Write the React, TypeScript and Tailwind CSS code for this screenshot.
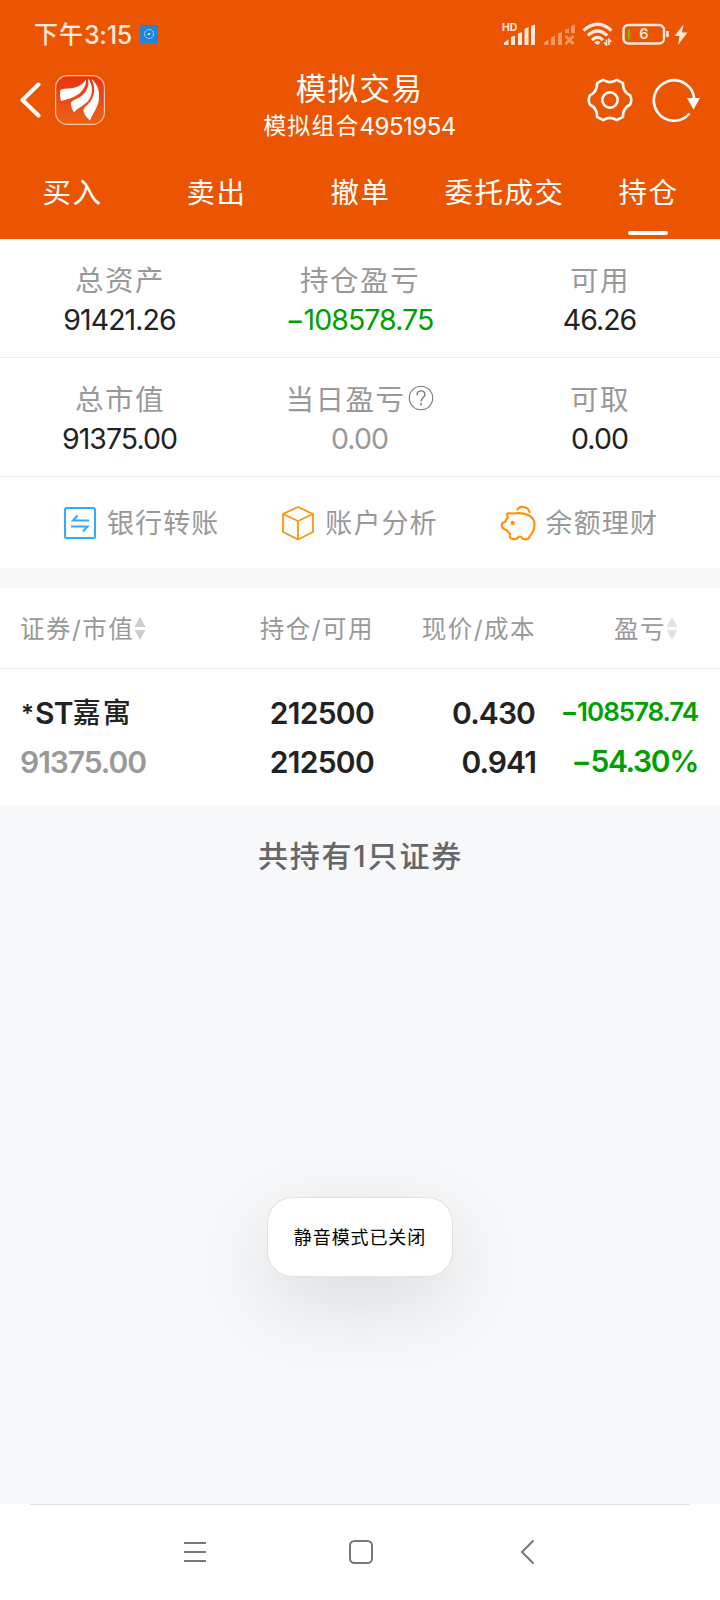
import React from "react";

const tabs = ["买入", "卖出", "撤单", "委托成交", "持仓"];

const StatusBar = () => (
  <div className="flex h-[68px] items-center justify-between pl-[34px] pr-[32px] text-[#fde9de]">
    <div className="flex items-center">
      <span className="pt-[2px] text-[24px] font-medium leading-[68px] tracking-[1px]">下午</span>
      <span className="pt-[2px] text-[25px] font-medium leading-[68px] tracking-[-0.300px]">3:15</span>
      <svg className="ml-[8px] h-[18px] w-[18px]" viewBox="0 0 18 18" fill="none">
        <rect width="18" height="18" fill="#1e86d6" />
        <circle cx="9" cy="9" r="4.500" stroke="#bfe3fa" strokeDasharray="2.2 0.8" />
        <path d="M8 9.800 10 8.200" stroke="#fff" strokeWidth="1.300" />
      </svg>
    </div>
    <div className="flex items-center">
      {/* Signal, SIM 1 */}
      <div className="relative h-[22px] w-[34px]">
        <span className="absolute left-0 top-0 text-[10.500px] font-bold leading-[10px]">HD</span>
        <svg className="h-[22px] w-[34px]" viewBox="0 0 34 22" fill="currentColor">
          <path d="M2 22v-2.500l4.500-3V22zM9 22v-8l4-1.500V22zM16 22V10.500l4-1.500V22zM22.500 22V6l4-2v18zM29 22V3L33 1.500V22z" />
        </svg>
      </div>
      {/* Signal, SIM 2 */}
      <svg className="ml-[7px] h-[22px] w-[32px]" viewBox="0 0 32 22" fill="currentColor" opacity="0.450">
        <path d="M1 22v-2.500l4.500-3V22zM8 22v-7.500l4-2V22zM15 22V10.500l4-1.500V22zM22 10V7l4-2v5zM28 10V3L32 1.500V10z" />
        <path d="M22.500 13l8 8M30.500 13l-8 8" stroke="currentColor" strokeWidth="2.800" />
      </svg>
      <svg className="ml-[7px] h-[24px] w-[31px]" viewBox="0 0 31 24" fill="none" stroke="currentColor" strokeWidth="3.200">
        <path d="M1.500 8.500Q15.500-4 29.500 8.500" />
        <path d="M5.800 13.500Q15.500 4.500 25.200 13.500" />
        <path d="M10 18.200Q15.500 12.500 21 18.200" />
        <path d="M12 20.500Q15.500 17 18.500 20.500L15.500 23z" fill="currentColor" stroke="none" />
        <path d="M24.500 17.500V23l-2.500-2.500M27 23v-5.500l2.500 2.500" strokeWidth="1.600" />
      </svg>
      <div className="relative ml-[9px] h-[22px] w-[48px]">
        <svg className="h-[22px] w-[48px]" viewBox="0 0 48 22" fill="none">
          <rect x="1.500" y="2" width="40.500" height="18.500" rx="5" stroke="currentColor" strokeWidth="2.400" />
          <path d="M7 6.500v10" stroke="#5fc800" strokeWidth="2" />
          <path d="M45.500 8v6" stroke="currentColor" strokeWidth="2.600" />
        </svg>
        <span className="absolute left-0 top-0 w-[44px] text-center text-[14.500px] font-semibold leading-[22px]">6</span>
      </div>
      <svg className="ml-[4px] h-[21px] w-[14px]" viewBox="0 0 14 21" fill="currentColor">
        <path d="M9.500 0.500 0.500 12h5L4 21 13.500 8.500H8z" />
      </svg>
    </div>
  </div>
);

const AppLogo = () => (
  <svg className="ml-[14px] h-[50px] w-[50px]" viewBox="0 0 50 50">
    <defs>
      <linearGradient id="logo" x1="0" y1="0" x2="0" y2="1">
        <stop offset="0" stopColor="#e93312" />
        <stop offset="1" stopColor="#ec6316" />
      </linearGradient>
    </defs>
    <rect x="0.600" y="0.600" width="48.800" height="48.800" rx="12" fill="url(#logo)" stroke="#f9c3a8" strokeWidth="1.200" />
    <g fill="#fff">
      <path d="M31 4.500C27 10 23 12 18 13C13 14 8 13 5.500 15C4.500 18 5 22.500 6 26C13 24 20 22.500 25 18C29 14 31.500 9.500 31 4.500z" />
      <path d="M33 3.500C34.500 12 31 18 25 22C21 24.500 17 25 16 28C15.700 32 17.500 34.500 19 37.500C22 33 29 31 33.500 25.500C38 20 38.500 10 33 3.500z" />
      <path d="M36.500 4C41 13 39.500 21 35 27C31.500 31 28 33 28.500 36.500C29.500 40.500 32.500 42.500 35 45.500C37 40 41.500 34.500 43.500 27C45.500 18 43 9 36.500 4z" />
    </g>
  </svg>
);

const TitleBar = () => (
  <div className="flex h-[76px] items-start justify-between pl-[19px] pr-[20px]">
    <div className="flex w-[170px] items-center pt-[7px]">
      <svg className="h-[36px] w-[22px]" viewBox="0 0 22 36" fill="none" stroke="#fff" strokeWidth="4" strokeLinecap="round" strokeLinejoin="round">
        <path d="M19.500 2.500 3.500 18l16 15.500" />
      </svg>
      <AppLogo />
    </div>
    <div className="text-center text-white">
      <div className="h-[41px] text-[30.500px] leading-[41px] tracking-[1.400px]">模拟交易</div>
      <div className="flex justify-center text-[23px] leading-[35px]">
        <span className="tracking-[1.100px]">模拟组合</span>
        <span className="text-[24px] tracking-[-0.500px]">4951954</span>
      </div>
    </div>
    <div className="flex w-[170px] items-center justify-end pt-[10px] text-white">
      <svg className="h-[44px] w-[46px]" viewBox="0 0 46 44" fill="none" stroke="#fff" strokeWidth="2.600" strokeLinejoin="round">
        <path d="M16.200 1.800Q23 6.500 29.800 1.800L36 5.200Q35.500 13.500 43.200 17.500Q45.200 22 43.200 26.500Q35.500 30.500 36 38.800L29.800 42.200Q23 37.500 16.200 42.200L10 38.800Q10.500 30.500 2.800 26.500Q0.800 22 2.800 17.500Q10.500 13.500 10 5.200z" />
        <circle cx="23" cy="22" r="7.700" />
      </svg>
      <svg className="ml-[19px] h-[44px] w-[48px]" viewBox="0 0 48 44" fill="none">
        <path d="M37.500 35.500A20.200 20.200 0 1 1 42.200 21" stroke="#fff" strokeWidth="2.600" />
        <path d="M35 20h13l-6.500 11.500z" fill="#fff" />
      </svg>
    </div>
  </div>
);

const Tabs = () => (
  <div className="grid h-[95px] grid-cols-5 text-white">
    {tabs.map((tab) => (
      <div key={tab} className="flex flex-col items-center">
        <span className="h-[87px] whitespace-nowrap pl-px pt-[28px] text-[28.500px] leading-[42px] tracking-[1.500px]">{tab}</span>
        {tab === "持仓" && <span className="h-1 w-10 rounded-sm bg-white" />}
      </div>
    ))}
  </div>
);

const summary = [
  [
    { label: "总资产", value: "91421.26", color: "text-[#222]" },
    { label: "持仓盈亏", value: "−108578.75", color: "text-[#00a000]" },
    { label: "可用", value: "46.26", color: "text-[#222]" },
  ],
  [
    { label: "总市值", value: "91375.00", color: "text-[#222]" },
    { label: "当日盈亏", value: "0.00", color: "text-[#999]", help: true },
    { label: "可取", value: "0.00", color: "text-[#222]" },
  ],
];

const HelpIcon = () => (
  <svg className="ml-[2px] mr-px mt-[6px] h-[26px] w-[26px]" viewBox="0 0 26 26" fill="none" stroke="#777">
    <circle cx="13" cy="13" r="11.700" strokeWidth="1.100" />
    <path d="M9 10.200C9 4.500 17 4.500 17 9.500C17 12.500 13 12.500 13 16.500" strokeWidth="1.400" />
    <path d="M13 18.300v2" strokeWidth="1.800" />
  </svg>
);

const Summary = () => (
  <>
    {summary.map((row, i) => (
      <div key={i} className="grid h-[119px] grid-cols-3 border-b border-[#ebebeb]">
        {row.map((cell) => (
          <div key={cell.label} className="flex flex-col items-center pt-[21px]">
            <div className="flex h-[39px]">
              <span className="text-[28.500px] leading-[42px] tracking-[1.500px] text-[#999]">{cell.label}</span>
              {cell.help && <HelpIcon />}
            </div>
            <span className={`pr-px text-[28.500px] leading-[41px] tracking-[-0.950px] ${cell.color}`}>{cell.value}</span>
          </div>
        ))}
      </div>
    ))}
  </>
);

const TransferIcon = () => (
  <svg className="h-[36px] w-[34px]" viewBox="0 0 34 36" fill="none" stroke="#38a8ff" strokeWidth="2">
    <rect x="2" y="3" width="30" height="30" rx="1.500" />
    <path d="M26 15.500H10L14.500 10.500M8 21.500h16.500L20 26.500" />
  </svg>
);

const CubeIcon = () => (
  <svg className="h-[36px] w-[34px]" viewBox="0 0 34 36" fill="none" stroke="#ff920a" strokeWidth="1.800" strokeLinejoin="round">
    <path d="M17 2 32 9v18l-15 7.500L2 27V9zM2 9l15 7 15-7M17 16v18" />
  </svg>
);

const PiggyIcon = () => (
  <svg className="h-[36px] w-[36px]" viewBox="0 0 36 36" fill="none" stroke="#ff920a" strokeWidth="2.200" strokeLinecap="round" strokeLinejoin="round">
    <path d="M13 8.500C10 8.500 7 7.500 7 9.500L7.800 12.500C6.500 14 6 15 5.500 16.500L2.500 18C1.500 20 1.500 22 3.500 23.500L7 25.500L10 29V32.500C11 34.300 15 34.300 16.500 34C17.500 33.500 17.500 31.500 20 31.500C22 31.500 22 34 24 34.200C26.500 34.500 29 34.500 29.500 31.500C32.500 28.500 34.500 23 34.500 19C34.500 11 26 7 13 8.500z" />
    <path d="M17.500 4.500C20 0.500 27.500 1 29.500 7" />
    <circle cx="12.700" cy="18" r="2.200" fill="#ff920a" stroke="none" />
  </svg>
);

const shortcuts = [
  { label: "银行转账", icon: <TransferIcon /> },
  { label: "账户分析", icon: <CubeIcon /> },
  { label: "余额理财", icon: <PiggyIcon /> },
];

const Shortcuts = () => (
  <div className="flex h-[91px] items-center justify-between pl-[63px] pr-[62px]">
    {shortcuts.map((item) => (
      <div key={item.label} className="flex items-center gap-[10px]">
        {item.icon}
        <span className="pt-[3px] text-[27px] leading-[40px] tracking-[1.100px] text-[#999]">{item.label}</span>
      </div>
    ))}
  </div>
);

const SortIcon = ({ color }: { color: string }) => (
  <svg className={`h-[24px] w-[12px] ${color}`} viewBox="0 0 12 24" fill="currentColor">
    <path d="M6 0 11.500 10H0.500zM0.500 13h11L6 23z" />
  </svg>
);

const Holdings = () => (
  <div className="bg-white">
    <div className="flex h-[81px] items-center border-b border-[#ebebeb] pl-[20px] pt-[2px] text-[24.500px] tracking-[1.500px] text-[#999]">
      <div className="flex w-[180px] items-center">
        证券/市值
        <SortIcon color="text-[#ccc]" />
      </div>
      <span className="w-[174px] text-right">持仓/可用</span>
      <span className="w-[162px] text-right">现价/成本</span>
      <div className="flex w-[142px] items-center justify-end">
        盈亏
        <SortIcon color="text-[#e2e2e2]" />
      </div>
    </div>
    <div className="flex h-[136px] pl-[20px] pt-[20px] text-[30px] font-[560] leading-[49px] text-[#222]">
      <div className="flex w-[180px] flex-col">
        <div className="flex h-[49px] pl-px">
          <span className="w-[14px] text-[24px]">*</span>
          <span className="font-semibold tracking-[-0.800px]">ST</span>
          <span className="text-[28px] font-medium tracking-[2px]">嘉寓</span>
        </div>
        <span className="tracking-[-1.050px] text-[#999]">91375.00</span>
      </div>
      <div className="flex w-[174px] flex-col text-right tracking-[-0.700px]">
        <span>212500</span>
        <span>212500</span>
      </div>
      <div className="flex w-[161px] flex-col text-right tracking-[-0.900px]">
        <span>0.430</span>
        <span className="-mr-px">0.941</span>
      </div>
      <div className="flex w-[163px] flex-col text-right text-[#00a000]">
        <span className="h-[48px] text-[26px] leading-[46px] tracking-[-1.050px]">−108578.74</span>
        <span className="tracking-[-1.350px]">−54.30%</span>
      </div>
    </div>
  </div>
);

const Toast = () => (
  <div className="absolute left-1/2 top-[1197px] flex h-[80px] w-[186px] -translate-x-1/2 items-center justify-center rounded-[26px] border border-[#e2e2e3] bg-white pt-px text-[18px] tracking-[0.900px] text-black shadow-[0_26px_80px_rgba(0,0,0,0.12)]">
    静音模式已关闭
  </div>
);

const NavBar = () => (
  <div className="h-[96px] bg-white px-[30px]">
    <div className="flex h-full items-center justify-between border-t border-[#e0e0e0] pb-[2px] pl-[153px] pr-[155px]">
      <svg className="h-[24px] w-[24px]" viewBox="0 0 24 24" stroke="#777" strokeWidth="2">
        <path d="M1 3h22M1 12h22M1 21h22" />
      </svg>
      <svg className="mr-[5px] h-[26px] w-[26px]" viewBox="0 0 26 26" fill="none" stroke="#777" strokeWidth="2">
        <rect x="2" y="2" width="22" height="22" rx="4.500" />
      </svg>
      <svg className="h-[26px] w-[16px]" viewBox="0 0 16 26" fill="none" stroke="#777" strokeWidth="2">
        <path d="M14.500 1.500 3 13l11.500 11.500" />
      </svg>
    </div>
  </div>
);

export default function App() {
  return (
    <div className="relative flex h-[1600px] w-[720px] flex-col overflow-hidden bg-[#f7f8fa] font-[Inter,'Noto_Sans_CJK_SC',sans-serif]">
      <header className="h-[239px] bg-[#eb5502]">
        <StatusBar />
        <TitleBar />
        <Tabs />
      </header>
      <main className="flex-1">
        <section className="mb-5 bg-white">
          <Summary />
          <Shortcuts />
        </section>
        <Holdings />
        <p className="pl-px pt-[30px] text-center text-[30px] font-medium leading-[42px] tracking-[1.800px] text-[#666]">共持有1只证券</p>
      </main>
      <NavBar />
      <Toast />
    </div>
  );
}
